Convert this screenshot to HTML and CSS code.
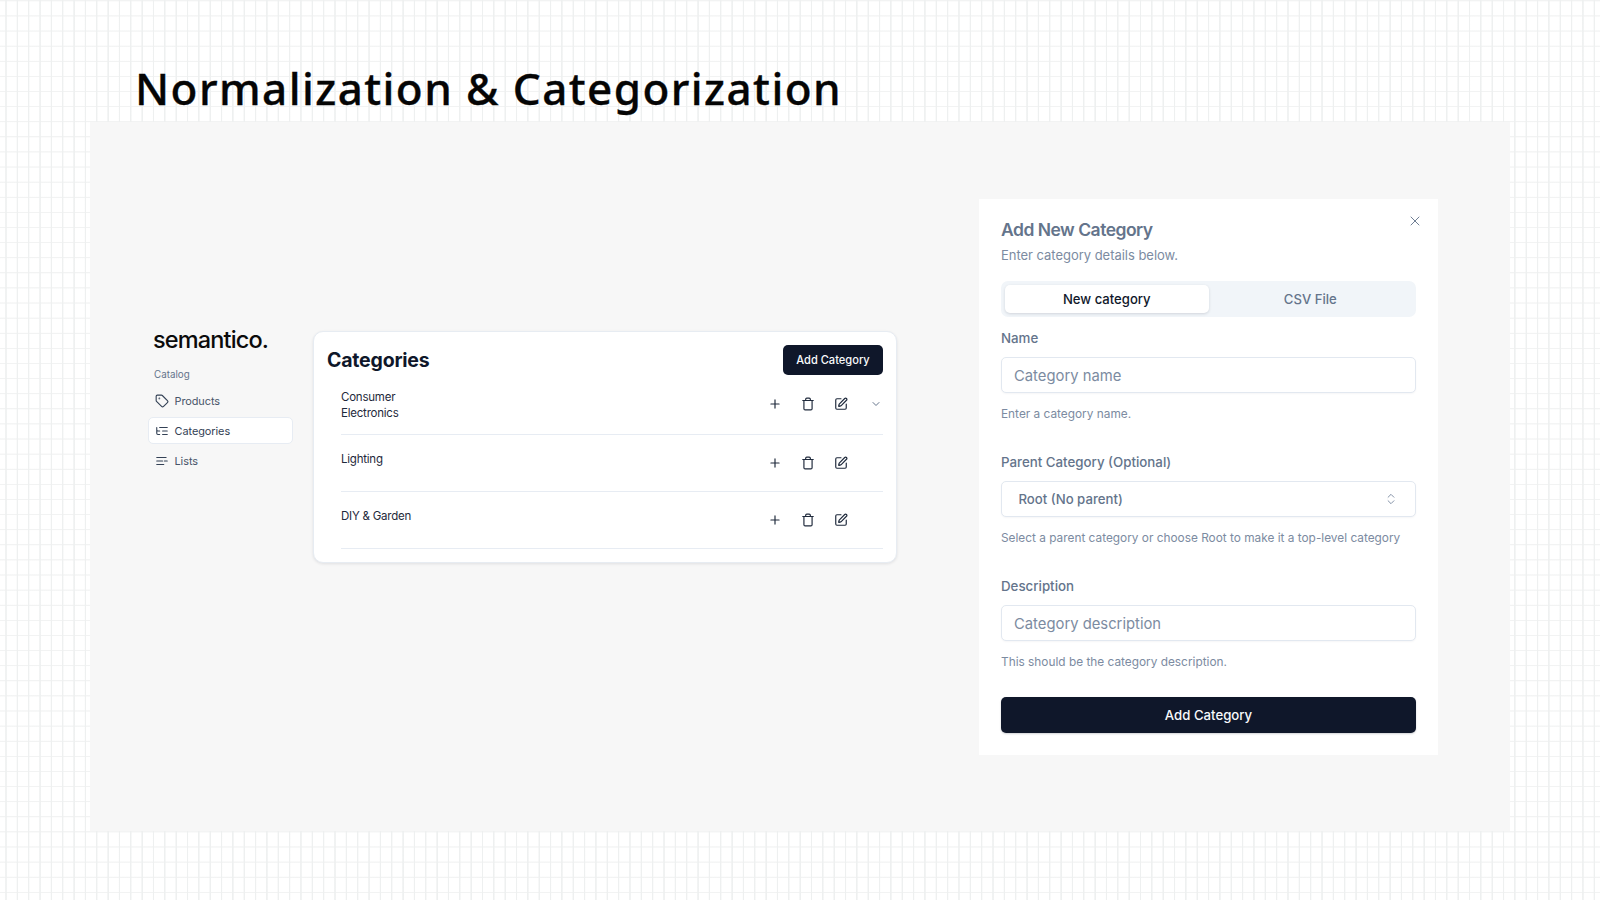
FILE: index.html
```html
<!DOCTYPE html>
<html lang="en">
<head>
<meta charset="utf-8">
<title>Normalization &amp; Categorization</title>
<link rel="stylesheet" href="styles.css">
</head>
<body>
<header class="slide-head"><h1 class="slide-title">Normalization &amp; Categorization</h1></header>
<main class="panel">
  <nav class="sidebar">
    <div class="logo">semantico.</div>
    <div class="nav-group">Catalog</div>
    <a class="nav-item"><svg class="nav-icon" viewBox="0 0 24 24"><path d="M12.586 2.586A2 2 0 0 0 11.172 2H4a2 2 0 0 0-2 2v7.172a2 2 0 0 0 .586 1.414l8.704 8.704a2.426 2.426 0 0 0 3.42 0l6.58-6.58a2.426 2.426 0 0 0 0-3.42z"/><circle cx="7.5" cy="7.5" r=".5"/></svg>Products</a>
    <a class="nav-item nav-active"><svg class="nav-icon" viewBox="0 0 24 24"><path d="M21 12h-8M21 6H8M21 18h-8M3 6v4c0 1.1.9 2 2 2h3M3 10v6c0 1.1.9 2 2 2h3"/></svg>Categories</a>
    <a class="nav-item"><svg class="nav-icon" viewBox="0 0 24 24"><path d="M3 6h16M3 12h10M16 12h5M3 18h12"/></svg>Lists</a>
  </nav>
  <section class="card">
    <div class="card-head">
      <h2 class="card-title">Categories</h2>
      <button class="btn-small">Add Category</button>
    </div>
    <div class="row row-first">
      <div class="row-name">Consumer<br>Electronics</div>
      <div class="actions">
        <svg class="act" viewBox="0 0 24 24"><path d="M5 12h14M12 5v14"/></svg>
        <svg class="act" viewBox="0 0 24 24"><path d="M3 6h18M19 6v14c0 1-1 2-2 2H7c-1 0-2-1-2-2V6M8 6V4c0-1 1-2 2-2h4c1 0 2 1 2 2v2"/></svg>
        <svg class="act" viewBox="0 0 24 24"><path d="M12 3H5a2 2 0 0 0-2 2v14a2 2 0 0 0 2 2h14a2 2 0 0 0 2-2v-7"/><path d="M18.375 2.625a1 1 0 0 1 3 3l-9.013 9.014a2 2 0 0 1-.853.505l-2.873.84a.5.5 0 0 1-.62-.62l.84-2.873a2 2 0 0 1 .506-.852z"/></svg>
        <svg class="chev" viewBox="0 0 24 24"><path d="m6 9 6 6 6-6"/></svg>
      </div>
    </div>
    <div class="row">
      <div class="row-name">Lighting</div>
      <div class="actions">
        <svg class="act" viewBox="0 0 24 24"><path d="M5 12h14M12 5v14"/></svg>
        <svg class="act" viewBox="0 0 24 24"><path d="M3 6h18M19 6v14c0 1-1 2-2 2H7c-1 0-2-1-2-2V6M8 6V4c0-1 1-2 2-2h4c1 0 2 1 2 2v2"/></svg>
        <svg class="act" viewBox="0 0 24 24"><path d="M12 3H5a2 2 0 0 0-2 2v14a2 2 0 0 0 2 2h14a2 2 0 0 0 2-2v-7"/><path d="M18.375 2.625a1 1 0 0 1 3 3l-9.013 9.014a2 2 0 0 1-.853.505l-2.873.84a.5.5 0 0 1-.62-.62l.84-2.873a2 2 0 0 1 .506-.852z"/></svg>
        <span class="chev"></span>
      </div>
    </div>
    <div class="row">
      <div class="row-name">DIY &amp; Garden</div>
      <div class="actions">
        <svg class="act" viewBox="0 0 24 24"><path d="M5 12h14M12 5v14"/></svg>
        <svg class="act" viewBox="0 0 24 24"><path d="M3 6h18M19 6v14c0 1-1 2-2 2H7c-1 0-2-1-2-2V6M8 6V4c0-1 1-2 2-2h4c1 0 2 1 2 2v2"/></svg>
        <svg class="act" viewBox="0 0 24 24"><path d="M12 3H5a2 2 0 0 0-2 2v14a2 2 0 0 0 2 2h14a2 2 0 0 0 2-2v-7"/><path d="M18.375 2.625a1 1 0 0 1 3 3l-9.013 9.014a2 2 0 0 1-.853.505l-2.873.84a.5.5 0 0 1-.62-.62l.84-2.873a2 2 0 0 1 .506-.852z"/></svg>
        <span class="chev"></span>
      </div>
    </div>
  </section>
  <aside class="dialog">
    <svg class="close" viewBox="0 0 24 24"><path d="M18 6 6 18M6 6l12 12"/></svg>
    <h2 class="dialog-title">Add New Category</h2>
    <p class="dialog-sub">Enter category details below.</p>
    <div class="tabs">
      <div class="tab tab-active">New category</div>
      <div class="tab">CSV File</div>
    </div>
    <div class="field field-first">
      <div class="label">Name</div>
      <div class="input">Category name</div>
      <div class="hint">Enter a category name.</div>
    </div>
    <div class="field">
      <div class="label">Parent Category (Optional)</div>
      <div class="input select"><span>Root (No parent)</span><svg class="updown" viewBox="0 0 24 24"><path d="m7 15 5 5 5-5M7 9l5-5 5 5"/></svg></div>
      <div class="hint">Select a parent category or choose Root to make it a top-level category</div>
    </div>
    <div class="field field-last">
      <div class="label">Description</div>
      <div class="input">Category description</div>
      <div class="hint">This should be the category description.</div>
    </div>
    <button class="btn-wide">Add Category</button>
  </aside>
</main>
</body>
</html>
```

FILE: styles.css
```css
* { box-sizing: border-box; }
html, body { margin: 0; height: 900px; overflow: hidden; }
body {
  font-family: "Inter", "Liberation Sans", sans-serif;
  background-color: #fff;
  background-image:
    repeating-linear-gradient(90deg, transparent 0, transparent 5px, #eef0f0 5.6px, #eef0f0 6.4px, transparent 7px, transparent 11.345px),
    repeating-linear-gradient(180deg, transparent 0, #f2f3f3 .5px, #f2f3f3 1.1px, transparent 1.7px, transparent 15.11px);
}
.slide-head { height: 122px; padding-left: 135px; }
.slide-title {
  margin: 0;
  padding-top: 58px;
  font-family: "Noto Sans", "Liberation Sans", sans-serif;
  font-weight: 500;
  font-size: 44px;
  line-height: 60px;
  letter-spacing: 1.43px;
  -webkit-text-stroke: .35px #050505;
  color: #050505;
}
.panel {
  margin: 0 90px;
  height: 709px;
  background: #f7f7f7;
  padding: 77px 0 0 58px;
  display: flex;
  align-items: flex-start;
}

/* sidebar */
.sidebar { width: 145px; margin-top: 126px; flex: none; }
.logo {
  padding-left: 5px;
  font-size: 23.5px;
  line-height: 30px;
  font-weight: 500;
  letter-spacing: -.85px;
  color: #0b0b0b;
}
.nav-group {
  padding-left: 6px;
  margin-top: 12px;
  margin-bottom: 4px;
  font-size: 9.8px;
  line-height: 16px;
  color: #64748b;
}
.nav-item {
  height: 27px;
  margin-bottom: 3px;
  padding-left: 6px;
  display: flex;
  align-items: center;
  gap: 5.5px;
  font-size: 10.9px;
  letter-spacing: -.05px;
  color: #475569;
  border: 1px solid transparent;
}
.nav-active {
  background: #fff;
  border-color: #e7ecf3;
  border-radius: 5px;
  color: #334155;
}
.nav-icon {
  width: 14px; height: 14px; flex: none;
  fill: none; stroke: #334155; stroke-width: 1.9; stroke-linecap: round; stroke-linejoin: round;
}

/* card */
.card {
  width: 584px;
  height: 232px;
  margin: 132px 0 0 20px;
  flex: none;
  background: #fff;
  border: 1px solid #e7ecf2;
  border-radius: 10px;
  box-shadow: 0 1px 3px rgba(15, 23, 42, .1);
  padding: 13px 13px 0 13px;
}
.card-head { display: flex; justify-content: space-between; align-items: center; height: 30px; }
.card-title { margin: 0; font-size: 19.5px; font-weight: 700; letter-spacing: -.2px; color: #0f172a; }
.btn-small {
  width: 100px; height: 30px; padding: 0;
  border: 0; border-radius: 5px;
  background: #0f172a; color: #f8fafc;
  font: 500 11.1px "Inter", "Liberation Sans", sans-serif;
}
.row {
  height: 57px;
  margin-left: 14px;
  border-bottom: 1px solid #e7ecf3;
  padding-top: 16px;
  display: flex;
  justify-content: space-between;
  position: relative;
}
.row-first { height: 59.5px; padding-top: 0; align-items: center; }
.row-first .row-name { margin-top: 1px; }
.row-name { font-size: 11.5px; line-height: 16px; font-weight: 400; letter-spacing: -.22px; color: #1e293b; }
.actions { display: flex; align-items: center; gap: 19px; height: 28px; margin: -2px 1px 0 0; }
.row-first .actions { margin-top: 0; }
.act {
  width: 14px; height: 14px; flex: none;
  fill: none; stroke: #1e293b; stroke-width: 2; stroke-linecap: round; stroke-linejoin: round;
}
.chev {
  display: block; width: 12px; height: 12px; flex: none; margin-left: 3px;
  fill: none; stroke: #64748b; stroke-width: 2; stroke-linecap: round; stroke-linejoin: round;
}

/* dialog */
.dialog {
  position: relative;
  width: 459px;
  height: 556px;
  margin-left: 82px;
  flex: none;
  background: #fff;
  padding: 19px 22px 0;
}
.close {
  position: absolute; top: 14px; right: 15px;
  width: 16px; height: 16px;
  fill: none; stroke: #64748b; stroke-width: 1.4; stroke-linecap: round;
}
.dialog-title { margin: 0; font-size: 17.5px; line-height: 24px; font-weight: 600; letter-spacing: -.5px; color: #64748b; }
.dialog-sub { margin: 3px 0 0; font-size: 13px; line-height: 20px; letter-spacing: -.03px; color: #7c8ba1; }
.tabs {
  margin-top: 16px;
  height: 36px;
  padding: 4px;
  display: flex;
  background: #f1f5f9;
  border-radius: 7px;
}
.tab {
  flex: 1 1 0;
  display: flex; align-items: center; justify-content: center;
  font-size: 13.1px; font-weight: 500; color: #64748b;
  border-radius: 5px;
}
.tab-active { background: #fff; color: #0f172a; box-shadow: 0 1px 3px rgba(15, 23, 42, .14); }
.field { margin-top: 29px; }
.field-first { margin-top: 11px; }
.field-last { margin-top: 29px; }
.label { font-size: 13.3px; line-height: 20px; font-weight: 500; color: #64748b; }
.input {
  margin-top: 9px;
  height: 36px;
  padding: 1px 12px 0;
  display: flex; align-items: center;
  background: #fff;
  border: 1px solid #e2e8f0;
  border-radius: 5px;
  box-shadow: 0 1px 2px rgba(15, 23, 42, .04);
  font-size: 14.8px;
  color: #7c8ba1;
}
.select { padding: 0 17px 0 16.5px; justify-content: space-between; font-size: 13.2px; font-weight: 500; color: #64748b; }
.updown {
  width: 14px; height: 14px;
  fill: none; stroke: #7c8ba1; stroke-width: 1.6; stroke-linecap: round; stroke-linejoin: round;
}
.hint { margin-top: 12px; font-size: 11.85px; line-height: 18px; white-space: nowrap; color: #7c8ba1; }
.btn-wide {
  display: block;
  width: 100%; height: 36px; margin-top: 26px; padding: 0;
  border: 0; border-radius: 5px;
  background: #0f172a; color: #f8fafc;
  font: 500 13.2px "Inter", "Liberation Sans", sans-serif;
  box-shadow: 0 1px 2px rgba(15, 23, 42, .2);
}
```
